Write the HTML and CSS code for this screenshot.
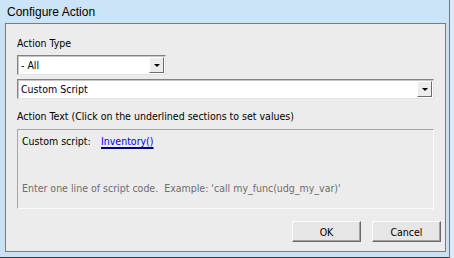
FILE: index.html
```html
<!DOCTYPE html>
<html lang="en">
<head>
    <meta charset="UTF-8">
    <title>Configure Action</title>
    <link rel="stylesheet" href="styles.css">
</head>
<body>
    <div class="window">
        <div class="titlebar">Configure Action</div>

        <div class="client">
            <div class="label">Action Type</div>
            <div class="combo combo-short">
                <span class="value">- All</span>
                <span class="drop"><i class="arrow"></i></span>
            </div>
            <div class="combo combo-wide">
                <span class="value">Custom Script</span>
                <span class="drop"><i class="arrow"></i></span>
            </div>

            <div class="label label-text">Action Text (Click on the underlined sections to set values)</div>
            <div class="panel">
                <div class="script-row">
                    <span class="script-name">Custom script:</span>
                    <a class="param" href="#">Inventory()</a>
                </div>
                <div class="hint">Enter one line of script code.&nbsp; Example: 'call my_func(udg_my_var)'</div>
            </div>

            <div class="buttons">
                <button class="btn">OK</button>
                <button class="btn">Cancel</button>
            </div>
        </div>
    </div>
</body>
</html>
```

FILE: styles.css
```css
html, body {
    margin: 0;
    padding: 0;
}
body {
    background: #dde9f4;
    font-family: "DejaVu Sans Condensed", "DejaVu Sans", sans-serif;
    font-stretch: condensed;
    font-size: 10.5px;
    color: #000;
}
.window {
    width: 450px;
    height: 258px;
    box-sizing: border-box;
    background: #c9e0f5;
    border-right: 1px solid #6b7a89;
    border-bottom: 1px solid #3c3c3c;
}
.titlebar {
    height: 23px;
    box-sizing: border-box;
    padding: 2px 0 0 7px;
    line-height: 21px;
    font-family: "Liberation Sans", Arial, sans-serif;
    font-stretch: normal;
    font-size: 12px;
    background: #cce4f8;
}
.client {
    margin: 0 3px 0 5px;
    height: 229px;
    box-sizing: border-box;
    border: 1px solid #7b7b7b;
    background: #ececec;
    padding: 13px 11px 9px 11px;
}
.label {
    line-height: 13px;
    height: 13px;
}
.label-text {
    margin-top: 11px;
}

/* combo boxes */
.combo {
    display: flex;
    height: 20px;
    box-sizing: border-box;
    margin-top: 5px;
    background: #fff;
    border: 1px solid;
    border-color: #828282 #e3e3e3 #e3e3e3 #828282;
    box-shadow: inset 1px 1px 0 #c6c6c6;
}
.combo-short {
    width: 149px;
}
.combo-wide {
    margin-top: 4px;
}
.combo .value {
    flex: 1;
    padding: 2px 0 0 3px;
    line-height: 15px;
}
.combo .drop {
    width: 15px;
    height: 16px;
    margin: 1px 1px 0 0;
    box-sizing: border-box;
    background: #ececec;
    border: 1px solid;
    border-color: #fff #6b6b6b #6b6b6b #fff;
    display: flex;
    align-items: center;
    justify-content: center;
}
.arrow {
    width: 0;
    height: 0;
    border-left: 3px solid transparent;
    border-right: 3px solid transparent;
    border-top: 3px solid #000;
}

/* action text panel */
.panel {
    margin-top: 6px;
    height: 80px;
    box-sizing: border-box;
    border: 1px solid;
    border-color: #a5a5a5 #fafafa #fafafa #a5a5a5;
    padding: 5px 4px 0 4px;
}
.script-row {
    display: flex;
    line-height: 13px;
}
.script-name {
    width: 79px;
}
.param {
    color: #0000ff;
    text-decoration: underline;
    text-decoration-color: #000080;
    text-decoration-thickness: 2px;
    text-underline-offset: 2px;
}
.hint {
    margin-top: 34px;
    line-height: 13px;
    color: #6d6d6d;
}

/* buttons */
.buttons {
    display: flex;
    justify-content: flex-end;
    gap: 11px;
    margin-top: 12px;
    margin-right: -7px;
}
.btn {
    width: 69px;
    height: 21px;
    padding: 0;
    font-family: inherit;
    font-stretch: inherit;
    font-size: 10.5px;
    color: #000;
    background: #e6e6e6;
    border: 1px solid;
    border-color: #fff #696969 #696969 #fff;
    box-shadow: inset -1px -1px 0 #a0a0a0;
}
```
